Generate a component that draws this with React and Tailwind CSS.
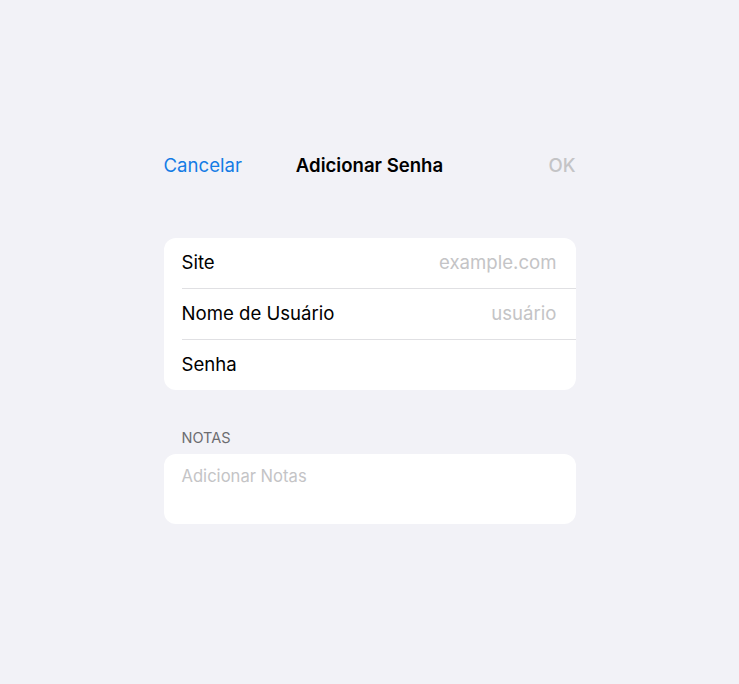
export default function App() {
  return (
    <div
      className="min-h-[684px] w-full bg-[#f2f2f7] pt-[144px]"
      style={{ fontFamily: "Inter, 'Noto Sans', sans-serif" }}
    >
      <div className="mx-auto w-[412px]">
        <div className="grid h-[44px] grid-cols-[1fr_auto_1fr] items-center">
          <span className="justify-self-start text-[18.6px] text-[#147ce5]">Cancelar</span>
          <span className="text-[18.6px] font-semibold text-black">Adicionar Senha</span>
          <span className="justify-self-end text-[18.6px] font-medium text-[#c4c4c6]">OK</span>
        </div>
        <div className="mt-[50px] overflow-hidden rounded-[12px] bg-white">
          <div className="flex h-[50px] items-center justify-between pl-[18px] pr-[19px]">
            <span className="text-[18.6px] text-black">Site</span>
            <span className="text-[18.6px] text-[#c4c4c6]">example.com</span>
          </div>
          <div className="ml-[18px] h-px bg-[#e0e0e3]" />
          <div className="flex h-[50px] items-center justify-between pl-[18px] pr-[19px]">
            <span className="text-[18.6px] text-black">Nome de Usuário</span>
            <span className="text-[18.6px] text-[#c4c4c6]">usuário</span>
          </div>
          <div className="ml-[18px] h-px bg-[#e0e0e3]" />
          <div className="flex h-[50px] items-center pl-[18px] pr-[19px]">
            <span className="text-[18.6px] text-black">Senha</span>
          </div>
        </div>
        <div className="mt-[38px] mb-[6px] pl-[18px] text-[14.5px] leading-[20px] text-[#6c6c70]">NOTAS</div>
        <div className="h-[70px] rounded-[12px] bg-white pl-[18px] pt-[10px]">
          <span className="text-[16.6px] leading-[24px] text-[#c4c4c6]">Adicionar Notas</span>
        </div>
      </div>
    </div>
  );
}
